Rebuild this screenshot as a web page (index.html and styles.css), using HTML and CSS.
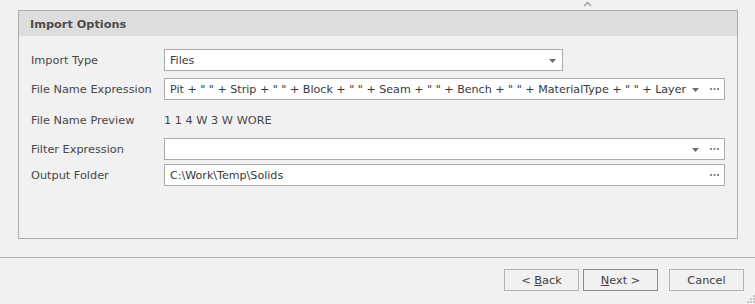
FILE: index.html
```html
<!DOCTYPE html>
<html>
<head>
<meta charset="utf-8">
<link rel="stylesheet" href="styles.css">
</head>
<body>
<div class="page">
  <div class="top-strip"><span class="collapse-caret"><svg width="9" height="6" viewBox="0 0 9 6"><path d="M1 5 L4.5 1.5 L8 5" fill="none" stroke="#9a9a9a" stroke-width="1.3"/></svg></span></div>
  <div class="group">
    <div class="group-header">Import Options</div>
    <div class="group-body">
      <div class="row row-first">
        <div class="label">Import Type</div>
        <div class="field field-short">
          <span class="field-text">Files</span>
          <span class="btn-drop"><svg width="7" height="4" viewBox="0 0 7 4"><path d="M0 0 H7 L3.5 4 Z" fill="#6e6e6e"/></svg></span>
        </div>
      </div>
      <div class="row row-second">
        <div class="label">File Name Expression</div>
        <div class="field">
          <span class="field-text">Pit + " " + Strip + " " + Block + " " + Seam + " " + Bench + " " + MaterialType + " " + Layer</span>
          <span class="btn-drop"><svg width="7" height="4" viewBox="0 0 7 4"><path d="M0 0 H7 L3.5 4 Z" fill="#6e6e6e"/></svg></span>
          <span class="btn-ellipsis"><svg width="9" height="2" viewBox="0 0 9 2"><rect x="0" y="0" width="2" height="2" fill="#8a8a8a"/><rect x="3.5" y="0" width="2" height="2" fill="#8a8a8a"/><rect x="7" y="0" width="2" height="2" fill="#8a8a8a"/></svg></span>
        </div>
      </div>
      <div class="row row-preview">
        <div class="label">File Name Preview</div>
        <div class="preview-text">1 1 4 W 3 W WORE</div>
      </div>
      <div class="row row-filter">
        <div class="label">Filter Expression</div>
        <div class="field">
          <span class="field-text"></span>
          <span class="btn-drop"><svg width="7" height="4" viewBox="0 0 7 4"><path d="M0 0 H7 L3.5 4 Z" fill="#6e6e6e"/></svg></span>
          <span class="btn-ellipsis"><svg width="9" height="2" viewBox="0 0 9 2"><rect x="0" y="0" width="2" height="2" fill="#8a8a8a"/><rect x="3.5" y="0" width="2" height="2" fill="#8a8a8a"/><rect x="7" y="0" width="2" height="2" fill="#8a8a8a"/></svg></span>
        </div>
      </div>
      <div class="row row-output">
        <div class="label">Output Folder</div>
        <div class="field">
          <span class="field-text">C:\Work\Temp\Solids</span>
          <span class="btn-ellipsis"><svg width="9" height="2" viewBox="0 0 9 2"><rect x="0" y="0" width="2" height="2" fill="#8a8a8a"/><rect x="3.5" y="0" width="2" height="2" fill="#8a8a8a"/><rect x="7" y="0" width="2" height="2" fill="#8a8a8a"/></svg></span>
        </div>
      </div>
    </div>
  </div>
  <div class="footer">
    <button class="btn">&lt; <u>B</u>ack</button>
    <button class="btn btn-default"><u>N</u>ext &gt;</button>
    <button class="btn btn-cancel">Cancel</button>
    <span class="grip"><svg width="8" height="8" viewBox="0 0 8 8"><rect x="6" y="0" width="2" height="2" fill="#c4c4c4"/><rect x="3" y="3" width="2" height="2" fill="#c4c4c4"/><rect x="6" y="3" width="2" height="2" fill="#c4c4c4"/><rect x="0" y="6" width="2" height="2" fill="#c4c4c4"/><rect x="3" y="6" width="2" height="2" fill="#c4c4c4"/><rect x="6" y="6" width="2" height="2" fill="#c4c4c4"/></svg></span>
  </div>
</div>
</body>
</html>
```

FILE: styles.css
```css
* { box-sizing: border-box; }
html, body {
  margin: 0;
  padding: 0;
  background: #f1f1f1;
}
body {
  font-family: "DejaVu Sans", Verdana, sans-serif;
  font-size: 11.3px;
  color: #4a4a4a;
}
.page {
  width: 755px;
  height: 304px;
  position: relative;
  display: flex;
  flex-direction: column;
}
.top-strip {
  height: 10px;
  position: relative;
}
.collapse-caret {
  position: absolute;
  left: 583px;
  top: 1px;
  line-height: 0;
}
.group {
  margin-left: 18px;
  width: 720px;
  height: 229px;
  border: 1px solid #adadad;
  display: flex;
  flex-direction: column;
}
.group-header {
  height: 25px;
  background: #dddddd;
  font-weight: bold;
  color: #4c4c4c;
  padding-left: 11px;
  padding-top: 1px;
  display: flex;
  align-items: center;
}
.group-body {
  padding: 13px 0 0 12px;
  display: flex;
  flex-direction: column;
}
.row {
  display: flex;
  align-items: center;
  height: 22px;
}
.row-second { margin-top: 7px; }
.row-preview { margin-top: 8px; height: 24px; }
.row-filter { margin-top: 6px; }
.row-output { margin-top: 4px; }
.label {
  width: 133px;
  flex: none;
  color: #474747;
}
.field {
  width: 561px;
  height: 22px;
  background: #ffffff;
  border: 1px solid #acacac;
  display: flex;
  align-items: center;
  padding-left: 5px;
  padding-right: 4px;
}
.field-short { width: 399px; padding-right: 4px; }
.field-text {
  flex: 1;
  white-space: nowrap;
  overflow: hidden;
  color: #383838;
  font-size: 11.1px;
}
.btn-drop {
  width: 10px;
  flex: none;
  display: flex;
  justify-content: center;
  align-items: center;
  line-height: 0;
  margin-right: 2px;
  margin-top: 1px;
}
.field-short .btn-drop { margin-right: 1px; }
.btn-ellipsis {
  width: 12px;
  flex: none;
  display: flex;
  justify-content: center;
  align-items: center;
  line-height: 0;
  margin-left: 6px;
}
.preview-text {
  color: #474747;
}
.footer {
  margin-top: 18px;
  border-top: 1px solid #b4b4b4;
  flex: 1;
  display: flex;
  justify-content: flex-end;
  align-items: flex-start;
  padding-top: 11px;
  padding-right: 11px;
  position: relative;
}
.btn {
  width: 75px;
  height: 22px;
  background: #f1f1f1;
  border: 1px solid #b3b3b3;
  font-family: "DejaVu Sans", Verdana, sans-serif;
  font-size: 11.3px;
  color: #404040;
  padding: 0;
  margin-left: 4px;
}
.btn-default { border-color: #8c8c8c; }
.btn-cancel { margin-left: 11px; }
.btn u { text-decoration: underline; }
.grip {
  position: absolute;
  right: 0;
  bottom: 1px;
  line-height: 0;
}
```
